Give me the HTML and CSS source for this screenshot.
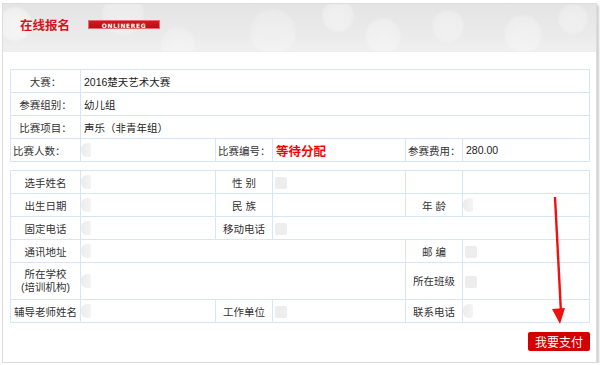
FILE: index.html
```html
<!DOCTYPE html>
<html lang="zh-CN">
<head>
  <meta charset="UTF-8">
  <title>在线报名</title>
  <link rel="stylesheet" href="styles.css">
</head>
<body>
  <div class="panel">
    <div class="panel-head">
      <h2>在线报名</h2>
      <span class="tag">ONLINEREG</span>
    </div>

    <table class="info">
      <colgroup>
        <col style="width:70px"><col style="width:135px"><col style="width:57px">
        <col style="width:133px"><col style="width:57px"><col>
      </colgroup>
      <tr>
        <td class="lbl">大赛：</td>
        <td colspan="5">2016楚天艺术大赛</td>
      </tr>
      <tr>
        <td class="lbl">参赛组别：</td>
        <td colspan="5">幼儿组</td>
      </tr>
      <tr>
        <td class="lbl">比赛项目：</td>
        <td colspan="5">声乐（非青年组）</td>
      </tr>
      <tr>
        <td class="lbl left">比赛人数：</td>
        <td class="blank"><span class="blur"></span></td>
        <td class="lbl left">比赛编号：</td>
        <td class="wait">等待分配</td>
        <td class="lbl left">参赛费用：</td>
        <td>280.00</td>
      </tr>
    </table>

    <table class="info player">
      <colgroup>
        <col style="width:70px"><col style="width:135px"><col style="width:57px">
        <col style="width:133px"><col style="width:57px"><col>
      </colgroup>
      <tr>
        <td class="lbl">选手姓名</td>
        <td class="blank"><span class="blur"></span></td>
        <td class="lbl">性 别</td>
        <td class="blank"><span class="blur sq"></span></td>
        <td></td>
        <td></td>
      </tr>
      <tr>
        <td class="lbl">出生日期</td>
        <td class="blank"><span class="blur"></span></td>
        <td class="lbl">民 族</td>
        <td></td>
        <td class="lbl">年 龄</td>
        <td class="blank"><span class="blur"></span></td>
      </tr>
      <tr>
        <td class="lbl">固定电话</td>
        <td class="blank"><span class="blur"></span></td>
        <td class="lbl">移动电话</td>
        <td colspan="3" class="blank"><span class="blur sq"></span></td>
      </tr>
      <tr>
        <td class="lbl">通讯地址</td>
        <td colspan="3" class="blank"><span class="blur"></span></td>
        <td class="lbl">邮 编</td>
        <td class="blank"><span class="blur sq"></span></td>
      </tr>
      <tr class="tall">
        <td class="lbl">所在学校<br>(培训机构)</td>
        <td colspan="3" class="blank"><span class="blur"></span></td>
        <td class="lbl">所在班级</td>
        <td class="blank"><span class="blur sq"></span></td>
      </tr>
      <tr>
        <td class="lbl">辅导老师姓名</td>
        <td class="blank"><span class="blur"></span></td>
        <td class="lbl">工作单位</td>
        <td class="blank"><span class="blur sq"></span></td>
        <td class="lbl">联系电话</td>
        <td class="blank"><span class="blur"></span></td>
      </tr>
    </table>

    <div class="actions">
      <button class="pay">我要支付</button>
    </div>

    <!-- red hint arrow drawn over the form -->
    <svg class="arrow" width="30" height="140" viewBox="0 0 30 140">
      <path d="M6 2 L12 118" stroke="#f01010" stroke-width="2.4" fill="none"/>
      <path d="M3 114 L16 113 L11 129 Z" fill="#f01010"/>
    </svg>
  </div>
</body>
</html>
```

FILE: styles.css
```css
body {
  margin: 0;
  background: #fff;
  font-family: "Liberation Sans", "Noto Sans CJK SC", sans-serif;
  color: #222;
}

.panel {
  position: relative;
  width: 593px;
  height: 358px;
  margin: 3px 0 0 2px;
  border: 1px solid #dcdcdc;
  box-shadow: 2px 2px 2px #cfcfcf;
  background: #fff;
}

.panel-head {
  box-sizing: border-box;
  height: 48px;
  display: flex;
  align-items: center;
  padding: 0 0 6px 17px;
  background:
    radial-gradient(circle at 12px 20px, rgba(255,255,255,0.55) 0, rgba(255,255,255,0.4) 15px, transparent 18px),
    radial-gradient(circle at 120px 10px, rgba(255,255,255,0.3) 0, rgba(255,255,255,0.25) 19px, transparent 22px),
    radial-gradient(circle at 175px 40px, rgba(255,255,255,0.3) 0, rgba(255,255,255,0.2) 15px, transparent 18px),
    radial-gradient(circle at 335px 12px, rgba(255,255,255,0.4) 0, rgba(255,255,255,0.3) 14px, transparent 17px),
    radial-gradient(circle at 380px 32px, rgba(255,255,255,0.35) 0, rgba(255,255,255,0.25) 16px, transparent 19px),
    radial-gradient(circle at 445px 22px, rgba(255,255,255,0.35) 0, rgba(255,255,255,0.25) 14px, transparent 17px),
    radial-gradient(circle at 520px 30px, rgba(255,255,255,0.35) 0, rgba(255,255,255,0.25) 17px, transparent 20px),
    radial-gradient(circle at 570px 15px, rgba(255,255,255,0.35) 0, rgba(255,255,255,0.25) 13px, transparent 16px),
    radial-gradient(circle at 270px 28px, rgba(255,255,255,0.25) 0, rgba(255,255,255,0.2) 21px, transparent 24px),
    linear-gradient(to bottom, #e4e4e4, #ebebeb 70%, #f0f0f0);
  border-bottom: 1px solid #eee;
}

.panel-head h2 {
  margin: 0;
  font-family: "Noto Sans CJK SC", sans-serif;
  font-size: 12.5px;
  font-weight: bold;
  color: #d8141b;
}

.tag {
  margin-left: 18px;
  width: 72px;
  height: 9px;
  line-height: 9px;
  text-align: center;
  background: linear-gradient(to bottom, #d11a20, #b80e14);
  border: 1px solid #e76a6e;
  box-sizing: border-box;
  color: #fff;
  font-family: "DejaVu Sans", sans-serif;
  font-size: 6px;
  font-weight: bold;
  letter-spacing: 0.6px;
}

.info {
  width: 580px;
  margin: 17px 0 0 7px;
  border-collapse: collapse;
  table-layout: fixed;
  font-size: 10.5px;
}

.info td {
  border: 1px solid #d6e6f8;
  height: 22px;
  padding: 0 3px;
  font-family: "Liberation Sans", "Noto Sans CJK SC", sans-serif;
  white-space: nowrap;
}

.info td.lbl {
  text-align: center;
  color: #333;
}

.info td.left {
  text-align: left;
  padding-left: 2px;
}

.info td.wait {
  color: #f00;
  font-weight: bold;
  font-size: 12.5px;
  font-family: "Noto Sans CJK SC", sans-serif;
}

.info td.blank {
  padding: 0;
}

.player {
  margin-top: 8px;
}

.player tr.tall td {
  height: 36px;
  line-height: 13px;
}

.blur {
  display: inline-block;
  vertical-align: middle;
  width: 10px;
  height: 14px;
  border-radius: 6px 2px 2px 6px;
  background: linear-gradient(to right, #ececec, #f4f4f4);
}

.blur.sq {
  width: 12px;
  height: 12px;
  margin-left: 2px;
  border-radius: 2px;
  background: #ededed;
}

.actions {
  display: flex;
  justify-content: flex-end;
  margin: 9px 6px 0 0;
}

.pay {
  width: 62px;
  height: 19px;
  padding: 0;
  border: none;
  border-radius: 2px;
  background: #d40000;
  color: #fff;
  font-family: "Noto Sans CJK SC", sans-serif;
  font-size: 12px;
  line-height: 19px;
}

.arrow {
  position: absolute;
  left: 546px;
  top: 191px;
}
```
